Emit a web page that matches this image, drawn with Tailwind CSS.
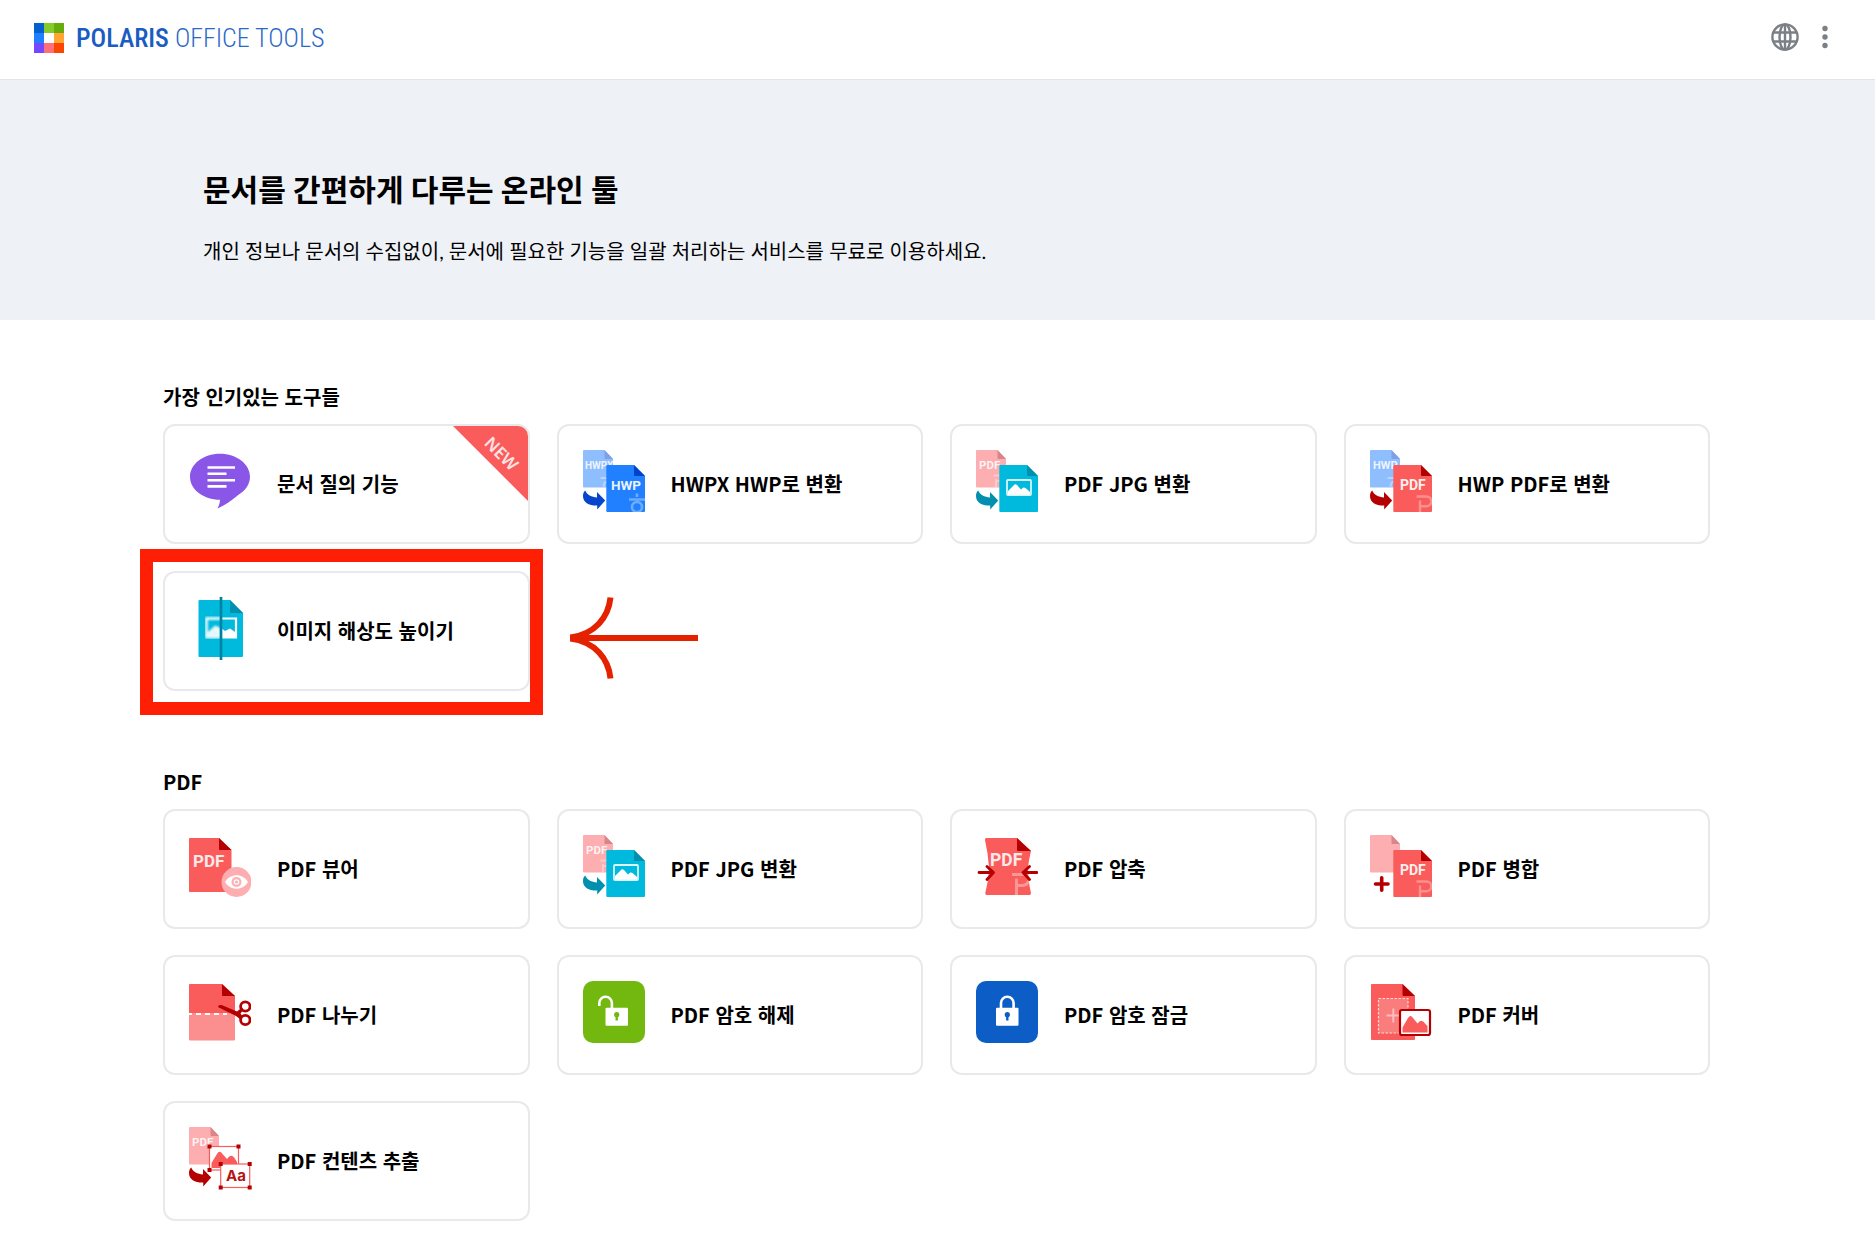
<!DOCTYPE html>
<html lang="ko">
<head>
<meta charset="utf-8">
<meta name="viewport" content="width=device-width, initial-scale=1">
<title>Polaris Office Tools</title>
<script src="https://cdn.jsdelivr.net/npm/@tailwindcss/browser@4"></script>
</head>
<body class="min-h-screen bg-white text-black font-['Noto_Sans_CJK_KR',sans-serif]">

<!-- Shared icon parts -->
<svg class="hidden" aria-hidden="true">
  <defs>
    <symbol id="page-back" viewBox="0 0 62 62">
      <path fill="currentColor" d="M1 0H21.500L30 9V37.500H1A1 1 0 0 1 0 36.500V1A1 1 0 0 1 1 0Z"/>
    </symbol>
    <symbol id="page-front" viewBox="0 0 62 62">
      <path fill="currentColor" d="M24.300 15H51L62 26V61a1 1 0 0 1-1 1H24.300a1 1 0 0 1-1-1V16a1 1 0 0 1 1-1Z"/>
    </symbol>
    <symbol id="fold-back" viewBox="0 0 62 62">
      <path fill="currentColor" d="M21.500 0L30 9H22.500A1 1 0 0 1 21.500 8Z"/>
    </symbol>
    <symbol id="fold-front" viewBox="0 0 62 62">
      <path fill="currentColor" d="M51 15L62 26H52A1 1 0 0 1 51 25Z"/>
    </symbol>
    <symbol id="turn" viewBox="0 0 62 62">
      <path fill="currentColor" d="M2.200 40.500C4 45 8.500 47.200 14 47.400V42L22.200 50.600L14.200 59.400V55.600C6 55.800 0 52.500 0 46C0 43.500 .800 41.500 2.200 40.500Z"/>
    </symbol>
    <symbol id="mark-p" viewBox="0 0 62 62">
      <path fill="none" stroke="#fff" stroke-opacity=".32" stroke-width="2.400" d="M46.500 46.500H56.500A4.800 4.800 0 0 1 56.500 56.200H50V50.500M50 55V62"/>
    </symbol>
    <symbol id="mark-h" viewBox="0 0 62 62">
      <g fill="none" stroke="#fff" stroke-opacity=".35" stroke-width="2.600"><path d="M54 43.500V47M46 49.500H62"/><circle cx="54" cy="57" r="5"/></g>
    </symbol>
    <symbol id="pdf-to-jpg" viewBox="0 0 62 62">
      <use href="#page-back" class="text-[#fcaeb0]"/><use href="#fold-back" class="text-[#d98589]"/>
      <text x="3" y="19" font-family="Roboto" font-weight="700" font-size="11.500" fill="#fff" fill-opacity=".85">PDF</text>
      <path fill="none" stroke="#fff" stroke-opacity=".35" stroke-width="2" d="M17.500 25.500H24M20 29V37M20 31H24"/>
      <use href="#page-front" class="text-[#00badd]"/><use href="#fold-front" class="text-[#008fae]"/>
      <rect x="31" y="30" width="24" height="15" rx="1" fill="none" stroke="#fff" stroke-opacity=".85" stroke-width="1.800"/>
      <path fill="#fff" d="M32 41L38.500 34.500C39.500 33.800 40 34.200 41 35L45 39.500L47 37.800C48 37.200 48.500 37.300 49.500 38L54 42V44.500H32Z"/>
      <use href="#turn" class="text-[#008fae]"/>
    </symbol>
  </defs>
</svg>

<header class="flex h-20 items-center justify-between border-b border-[#e2e4e7] pl-[34px] pr-[34px]">
  <a href="#" class="-mt-1 flex items-center gap-3" aria-label="Polaris Office Tools">
    <svg class="size-[30px]" viewBox="0 0 30 30" aria-hidden="true">
      <g shape-rendering="crispEdges">
      <rect width="10" height="10" fill="#0560cf"/><rect x="10" width="10" height="10" fill="#86cc28"/><rect x="20" width="10" height="10" fill="#66ad0b"/>
      <rect y="10" width="10" height="10" fill="#1f80ff"/><rect x="20" y="10" width="10" height="10" fill="#ffa530"/>
      <rect y="20" width="10" height="10" fill="#7548ff"/><rect x="10" y="20" width="10" height="10" fill="#ff7076"/><rect x="20" y="20" width="10" height="10" fill="#fa4600"/>
      </g>
    </svg>
    <span class="flex gap-1.5 font-['Roboto_Condensed',Roboto,sans-serif] text-[26px] leading-8"><span class="font-medium text-[#1a5cc2]">POLARIS</span><span class="font-light text-[#2b68c8]">OFFICE TOOLS</span></span>
  </a>
  <div class="-mt-1.5 flex items-center gap-2 text-[#7b8086]">
    <button type="button" aria-label="언어 선택" class="flex size-8 items-center justify-center">
      <svg class="size-7" viewBox="0 0 28 28" fill="none" stroke="currentColor" stroke-width="2.400" aria-hidden="true"><circle cx="14" cy="14" r="12.600"/><ellipse cx="14" cy="14" rx="5.500" ry="12.600"/><path d="M14 1.500V26.500M2.500 9.500H25.500M2.500 18.500H25.500"/></svg>
    </button>
    <button type="button" aria-label="메뉴" class="flex size-8 items-center justify-center">
      <svg class="h-6 w-2" viewBox="0 0 8 24" fill="currentColor" aria-hidden="true"><circle cx="4" cy="3.500" r="2.700"/><circle cx="4" cy="12" r="2.700"/><circle cx="4" cy="20.500" r="2.700"/></svg>
    </button>
  </div>
</header>

<section class="bg-[#eef1f6] px-[203px] pt-[87px] pb-[54px] font-[Lato,'Noto_Sans_CJK_KR',sans-serif]">
  <h1 class="text-[30px] leading-[44px] font-bold">문서를 간편하게 다루는 온라인 툴</h1>
  <p class="mt-[25px] text-[20px] leading-[30px]">개인 정보나 문서의 수집없이, 문서에 필요한 기능을 일괄 처리하는 서비스를 무료로 이용하세요.</p>
</section>

<main class="flex flex-col gap-[76px] pt-[62px] pr-[165px] pb-6 pl-[163px]">
  <section>
    <h2 class="mb-3 text-[20px] leading-[30px] font-bold">가장 인기있는 도구들</h2>
    <ul class="grid grid-cols-4 gap-[27px]">
      <li>
        <a href="#" class="relative flex h-[120px] items-center gap-[26px] overflow-hidden rounded-xl border-2 border-[#e8e9eb] px-6">
          <svg class="mb-1.5 size-[62px] shrink-0" viewBox="0 0 62 62" aria-hidden="true">
            <path fill="#8a56e8" d="M31 3.700C47.500 3.700 61 14 61 26.700C61 34 56.500 40.500 49.500 44.700C43 50 36 55.500 28.500 58.500C30 55.500 31 52.500 31 49.700C14.500 49.700 1 39.500 1 26.700C1 14 14.500 3.700 31 3.700Z"/>
            <path stroke="#fff" stroke-width="2.600" d="M18.500 17.500H46M18.500 23.800H37.500M18.500 30.200H46M18.500 36.400H37.500"/>
          </svg>
          <span class="text-[20px] leading-[30px] font-bold">문서 질의 기능</span>
          <svg class="absolute top-0 right-0 size-[75px]" viewBox="0 0 75 75" role="img" aria-label="NEW">
            <path fill="#fa5c5c" d="M0 0H75V75Z"/>
            <text x="49" y="34" text-anchor="middle" transform="rotate(45 49 27)" font-family="Noto Sans" font-weight="600" font-size="17" fill="#ffe3e3">NEW</text>
          </svg>
        </a>
      </li>
      <li>
        <a href="#" class="flex h-[120px] items-center gap-[26px] rounded-xl border-2 border-[#e8e9eb] px-6">
          <svg class="mb-1.5 size-[62px] shrink-0" viewBox="0 0 62 62" aria-hidden="true">
            <use href="#page-back" class="text-[#8fbeff]"/><use href="#fold-back" class="text-[#7fa0e6]"/>
            <text x="2" y="19" font-family="Roboto" font-weight="700" font-size="10" fill="#fff" fill-opacity=".85">HWPX</text>
            <path fill="none" stroke="#fff" stroke-opacity=".35" stroke-width="2" d="M17.500 28H24M24 31.500A4 4 0 0 0 21 37"/>
            <use href="#page-front" class="text-[#2080ff]"/><use href="#fold-front" class="text-[#0042cc]"/>
            <text x="28" y="40" font-family="Roboto" font-weight="700" font-size="13.500" fill="#fff" fill-opacity=".92">HWP</text>
            <use href="#mark-h"/><use href="#turn" class="text-[#0645cc]"/>
          </svg>
          <span class="text-[20px] leading-[30px] font-bold">HWPX HWP로 변환</span>
        </a>
      </li>
      <li>
        <a href="#" class="flex h-[120px] items-center gap-[26px] rounded-xl border-2 border-[#e8e9eb] px-6">
          <svg class="mb-1.5 size-[62px] shrink-0" aria-hidden="true"><use href="#pdf-to-jpg"/></svg>
          <span class="text-[20px] leading-[30px] font-bold">PDF JPG 변환</span>
        </a>
      </li>
      <li>
        <a href="#" class="flex h-[120px] items-center gap-[26px] rounded-xl border-2 border-[#e8e9eb] px-6">
          <svg class="mb-1.5 size-[62px] shrink-0" viewBox="0 0 62 62" aria-hidden="true">
            <use href="#page-back" class="text-[#8fbeff]"/><use href="#fold-back" class="text-[#7fa0e6]"/>
            <text x="3" y="19" font-family="Roboto" font-weight="700" font-size="11" fill="#fff" fill-opacity=".85">HWP</text>
            <path fill="none" stroke="#fff" stroke-opacity=".35" stroke-width="2" d="M17.500 28H24M24 31.500A4 4 0 0 0 21 37"/>
            <use href="#page-front" class="text-[#fa5c5c]"/><use href="#fold-front" class="text-[#b40000]"/>
            <text x="30" y="40" font-family="Roboto" font-weight="700" font-size="14" fill="#fff" fill-opacity=".92">PDF</text>
            <use href="#mark-p"/><use href="#turn" class="text-[#b40000]"/>
          </svg>
          <span class="text-[20px] leading-[30px] font-bold">HWP PDF로 변환</span>
        </a>
      </li>
      <li class="relative">
        <a href="#" class="flex h-[120px] items-center gap-[26px] rounded-xl border-2 border-[#e8e9eb] px-6">
          <svg class="mb-1.5 size-[62px] shrink-0 overflow-visible" viewBox="0 0 62 62" aria-hidden="true">
            <filter id="soft"><feGaussianBlur stdDeviation=".8"/></filter>
            <path fill="#00badd" d="M10.500 3H41L54 16V59a1 1 0 0 1-1 1H10.500a1 1 0 0 1-1-1V4a1 1 0 0 1 1-1Z"/>
            <path fill="#008fae" d="M41 3L54 16H42a1 1 0 0 1-1-1Z"/>
            <g filter="url(#soft)" opacity=".9"><path fill="none" stroke="#fff" stroke-width="2.800" d="M32 21.500H17.500V40H32"/><path fill="#fff" d="M18 36L26 28.500L32 31V40H18Z"/></g>
            <path fill="none" stroke="#fff" stroke-width="2.200" d="M32 21.500H47V40.500H32"/>
            <path fill="#fff" d="M32 31L36 34L41 31.500L46 35V40H32Z"/>
            <path stroke="#0083a0" stroke-width="2.700" d="M32 0V63"/>
          </svg>
          <span class="text-[20px] leading-[30px] font-bold">이미지 해상도 높이기</span>
        </a>
        <!-- Highlight frame and pointer over the featured tool -->
        <div class="pointer-events-none absolute -top-[22px] -right-[13px] -bottom-6 -left-[23px] border-[13px] border-[#ff1f05]"></div>
        <svg class="pointer-events-none absolute top-[26px] left-full ml-10 h-[82px] w-32" viewBox="0 0 128 82" fill="none" stroke="#e42200" stroke-width="6" aria-hidden="true">
          <path d="M128 41H0M40.500 .500C38.500 20 25 37.500 0 40.500M40.500 81.500C38.500 62 25 44.500 0 41.500"/>
        </svg>
      </li>
    </ul>
  </section>

  <section>
    <h2 class="mb-3 text-[20px] leading-[30px] font-bold">PDF</h2>
    <ul class="grid grid-cols-4 gap-x-[27px] gap-y-[26px]">
      <li>
        <a href="#" class="flex h-[120px] items-center gap-[26px] rounded-xl border-2 border-[#e8e9eb] px-6">
          <svg class="mb-1.5 size-[62px] shrink-0" viewBox="0 0 62 62" aria-hidden="true">
            <path fill="#fa5c5c" d="M1 3H30L42.500 15V56a1 1 0 0 1-1 1H1a1 1 0 0 1-1-1V4a1 1 0 0 1 1-1Z"/>
            <path fill="#b40000" d="M30 3L42.500 15H31a1 1 0 0 1-1-1Z"/>
            <text x="4" y="32" font-family="Roboto" font-weight="700" font-size="17" fill="#ffeaea">PDF</text>
            <circle cx="47.500" cy="47" r="15" fill="#feaeb0"/>
            <path fill="#fff" d="M36 47C41 38 54 38 59 47C54 56 41 56 36 47Z"/><circle cx="47.500" cy="47" r="5" fill="#feaeb0"/><circle cx="47.500" cy="47" r="2.200" fill="#feaeb0" stroke="#fff" stroke-width="1.200"/>
          </svg>
          <span class="text-[20px] leading-[30px] font-bold">PDF 뷰어</span>
        </a>
      </li>
      <li>
        <a href="#" class="flex h-[120px] items-center gap-[26px] rounded-xl border-2 border-[#e8e9eb] px-6">
          <svg class="mb-1.5 size-[62px] shrink-0" aria-hidden="true"><use href="#pdf-to-jpg"/></svg>
          <span class="text-[20px] leading-[30px] font-bold">PDF JPG 변환</span>
        </a>
      </li>
      <li>
        <a href="#" class="flex h-[120px] items-center gap-[26px] rounded-xl border-2 border-[#e8e9eb] px-6">
          <svg class="mb-1.5 size-[62px] shrink-0" viewBox="0 0 62 62" aria-hidden="true">
            <path fill="#fa5c5c" d="M10 3H41L55 16Q53 24 52 32Q52 46 55 58Q55 60 53.500 60H11Q9 60 9.300 58Q13 45 13 32Q12 18 9 5Q9 3 10 3Z"/>
            <path fill="#b40000" d="M41 3L55 16H42a1 1 0 0 1-1-1Z"/>
            <text x="14" y="31" font-family="Roboto" font-weight="700" font-size="17.500" fill="#ffeaea">PDF</text>
            <path fill="none" stroke="#fff" stroke-opacity=".35" stroke-width="3" d="M36 39.500H49M40.500 43.500V60M40.500 50.500H47Q51 50 53 46"/>
            <path fill="none" stroke="#b40000" stroke-width="2.800" stroke-linecap="round" stroke-linejoin="round" d="M3 37.500H17M11 31.500L17.500 37.500L11 44.500M61 37.500H47M53.500 31.500L47 37.500L53.500 44.500"/>
          </svg>
          <span class="text-[20px] leading-[30px] font-bold">PDF 압축</span>
        </a>
      </li>
      <li>
        <a href="#" class="flex h-[120px] items-center gap-[26px] rounded-xl border-2 border-[#e8e9eb] px-6">
          <svg class="mb-1.5 size-[62px] shrink-0" viewBox="0 0 62 62" aria-hidden="true">
            <use href="#page-back" class="text-[#fcaeb0]"/><use href="#fold-back" class="text-[#d98589]"/>
            <use href="#page-front" class="text-[#fa5c5c]"/><use href="#fold-front" class="text-[#b40000]"/>
            <text x="30" y="40" font-family="Roboto" font-weight="700" font-size="14" fill="#fff" fill-opacity=".92">PDF</text>
            <use href="#mark-p"/>
            <path stroke="#b40000" stroke-width="3.600" stroke-linecap="round" d="M5.500 49H18M11.700 42.700V55.300"/>
          </svg>
          <span class="text-[20px] leading-[30px] font-bold">PDF 병합</span>
        </a>
      </li>
      <li>
        <a href="#" class="flex h-[120px] items-center gap-[26px] rounded-xl border-2 border-[#e8e9eb] px-6">
          <svg class="mb-1.5 size-[62px] shrink-0" viewBox="0 0 62 62" aria-hidden="true">
            <path fill="#fa5c5c" d="M1 3H33L46 15V32H0V4a1 1 0 0 1 1-1Z"/>
            <path fill="#fb8e8f" d="M0 32H46V58.500a1 1 0 0 1-1 1H1a1 1 0 0 1-1-1Z"/>
            <path fill="#b40000" d="M33 3L46 15H34a1 1 0 0 1-1-1Z"/>
            <path stroke="#fff" stroke-width="2" stroke-dasharray="5 4" d="M-2 33H38"/>
            <path fill="#b40000" d="M29 25C31 23.500 33 24 35 25L48 30.500L53 26.500L54.500 28.500L51.500 32.500L54 36L51.500 38.500L47 35L32 27.500C31 27 29 26.500 29 25Z"/>
            <g fill="none" stroke="#b40000" stroke-width="2.800"><circle cx="56.300" cy="25.500" r="4.700"/><circle cx="56.300" cy="39" r="4.700"/></g>
          </svg>
          <span class="text-[20px] leading-[30px] font-bold">PDF 나누기</span>
        </a>
      </li>
      <li>
        <a href="#" class="flex h-[120px] items-center gap-[26px] rounded-xl border-2 border-[#e8e9eb] px-6">
          <svg class="mb-1.5 size-[62px] shrink-0" viewBox="0 0 62 62" aria-hidden="true">
            <rect width="62" height="62" rx="10" fill="#72b80f"/>
            <rect x="22.500" y="26.700" width="22.500" height="18" rx="1" fill="#fff"/>
            <path fill="none" stroke="#fff" stroke-width="2.600" d="M16.300 25V22A6.300 6.300 0 0 1 28.900 22V27"/>
            <circle cx="33.700" cy="33.700" r="2.600" fill="#72b80f"/><path stroke="#72b80f" stroke-width="2.400" d="M33.700 34V39.500"/>
          </svg>
          <span class="text-[20px] leading-[30px] font-bold">PDF 암호 해제</span>
        </a>
      </li>
      <li>
        <a href="#" class="flex h-[120px] items-center gap-[26px] rounded-xl border-2 border-[#e8e9eb] px-6">
          <svg class="mb-1.5 size-[62px] shrink-0" viewBox="0 0 62 62" aria-hidden="true">
            <rect width="62" height="62" rx="10" fill="#0d5dc6"/>
            <rect x="20" y="26.700" width="22.500" height="18" rx="1" fill="#fff"/>
            <path fill="none" stroke="#fff" stroke-width="2.600" d="M25 27V22A6.300 6.300 0 0 1 37.600 22V27"/>
            <circle cx="31.300" cy="33.700" r="2.600" fill="#0d5dc6"/><path stroke="#0d5dc6" stroke-width="2.400" d="M31.300 34V39.500"/>
          </svg>
          <span class="text-[20px] leading-[30px] font-bold">PDF 암호 잠금</span>
        </a>
      </li>
      <li>
        <a href="#" class="flex h-[120px] items-center gap-[26px] rounded-xl border-2 border-[#e8e9eb] px-6">
          <svg class="mb-1.5 size-[62px] shrink-0" viewBox="0 0 62 62" aria-hidden="true">
            <path fill="#fa5c5c" d="M2 3H32.500L45 15V58a1 1 0 0 1-1 1H2a1 1 0 0 1-1-1V4a1 1 0 0 1 1-1Z"/>
            <path fill="#b40000" d="M32.500 3L45 15H33.500a1 1 0 0 1-1-1Z"/>
            <rect x="8.500" y="17.500" width="29.500" height="34.500" fill="#fa7d7d" stroke="#ffd6d6" stroke-width="1.200" stroke-dasharray="2.500 1.500"/>
            <path stroke="#ffbcbc" stroke-width="2" d="M16.500 34.500H30M23.300 27.500V41.500"/>
            <rect x="30" y="29" width="30" height="25" rx="2" fill="#fff" stroke="#b40000" stroke-width="2.200"/>
            <path fill="#fa5c5c" d="M32.500 51.500V46.500L38 37Q40.500 33 43 37L47.500 42.500Q51.500 37 55 42.500L57.500 45V51.500Z"/>
          </svg>
          <span class="text-[20px] leading-[30px] font-bold">PDF 커버</span>
        </a>
      </li>
      <li>
        <a href="#" class="flex h-[120px] items-center gap-[26px] rounded-xl border-2 border-[#e8e9eb] px-6">
          <svg class="mb-1.5 size-[62px] shrink-0 overflow-visible" viewBox="0 0 62 62" aria-hidden="true">
            <use href="#page-back" class="text-[#fcaeb0]"/><use href="#fold-back" class="text-[#d98589]"/>
            <text x="3" y="19" font-family="Roboto" font-weight="700" font-size="11.500" fill="#fff" fill-opacity=".85">PDF</text>
            <rect x="20.500" y="19.500" width="29" height="23.500" fill="#fff" stroke="#fa5c5c" stroke-width="1.200"/>
            <path fill="#fa5c5c" d="M22.500 41V36L28 27Q30.500 22.500 33.500 27L38 32Q42 26 45.500 31L48 35V41Z"/>
            <path fill="#b40000" d="M18.500 17.500h4v4h-4zM47.500 17.500h4v4h-4zM18.500 41h4v4h-4z"/>
            <rect x="31.700" y="37" width="29" height="23.500" fill="#fff" stroke="#fa5c5c" stroke-width="1.200"/>
            <path fill="#b40000" d="M29.700 35h4v4h-4zM58.700 35h4v4h-4zM29.700 58.500h4v4h-4zM58.700 58.500h4v4h-4z"/>
            <text x="37" y="54" font-family="Inter" font-weight="700" font-size="15" fill="#b81414">Aa</text>
            <use href="#turn" class="text-[#b40000]"/>
          </svg>
          <span class="text-[20px] leading-[30px] font-bold">PDF 컨텐츠 추출</span>
        </a>
      </li>
    </ul>
  </section>
</main>
</body>
</html>
